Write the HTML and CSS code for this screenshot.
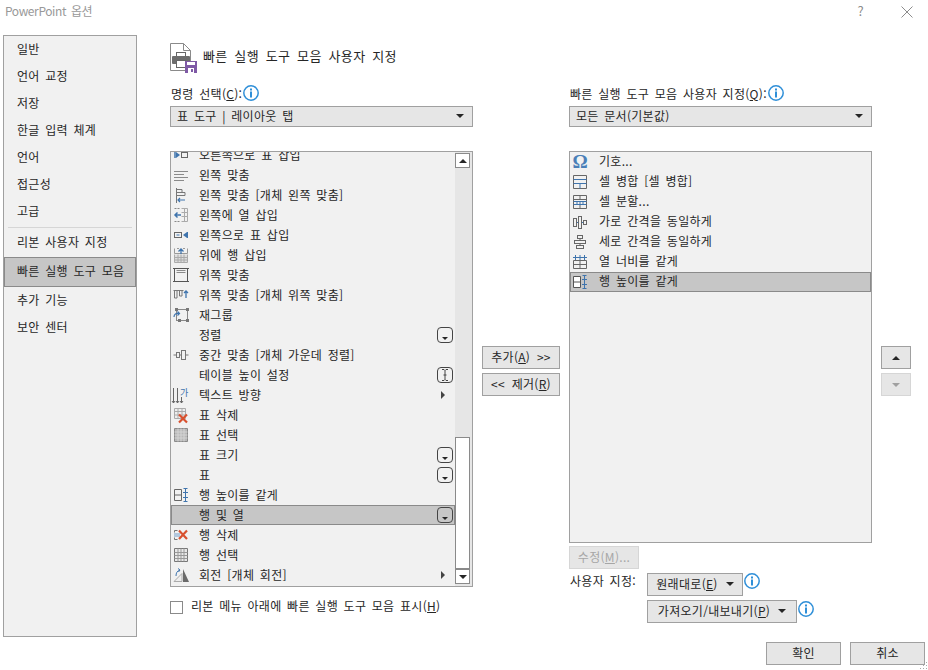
FILE: index.html
```html
<!DOCTYPE html>
<html lang="ko">
<head>
<meta charset="utf-8">
<title>PowerPoint 옵션</title>
<link rel="stylesheet" href="styles.css">
</head>
<body>
<div class="dialog">
  <header class="titlebar">
    <span class="title">PowerPoint 옵션</span>
    <span class="help">?</span>
    <svg class="close" width="12" height="12" viewBox="0 0 12 12"><path d="M.5.5l11 11M11.500.5l-11 11" stroke="#8c8c8c" fill="none"/></svg>
  </header>
  <div class="body">
    <nav class="sidebar">
      <div class="nav-item">일반</div>
      <div class="nav-item">언어 교정</div>
      <div class="nav-item">저장</div>
      <div class="nav-item">한글 입력 체계</div>
      <div class="nav-item">언어</div>
      <div class="nav-item">접근성</div>
      <div class="nav-item">고급</div>
      <div class="nav-sep"></div>
      <div class="nav-item">리본 사용자 지정</div>
      <div class="nav-item nav-selected">빠른 실행 도구 모음</div>
      <div class="nav-item">추가 기능</div>
      <div class="nav-item">보안 센터</div>
    </nav>
    <main class="main">
      <div class="heading">
        <svg class="heading-icon" width="28" height="30" viewBox="0 0 28 30">
          <path d="M.5.5h13l7 7v20H.5z" fill="#fff" stroke="#8a8a8a"/>
          <path d="M13.500.5v7h7" fill="none" stroke="#8a8a8a"/>
          <rect x="6.500" y="9.500" width="9" height="6" fill="#fff" stroke="#666"/>
          <rect x="2" y="13" width="18" height="8" rx="1" fill="#6d6d6d"/>
          <rect x="6.500" y="17.500" width="9" height="7" fill="#fff" stroke="#666"/>
          <rect x="15" y="18" width="12" height="12" fill="#7f5aa6"/>
          <rect x="17" y="19" width="8" height="3" fill="#fff"/>
          <rect x="18" y="25" width="6" height="5" fill="#fff"/>
          <rect x="21" y="26" width="2" height="3" fill="#7f5aa6"/>
        </svg>
        <h1 class="heading-text">빠른 실행 도구 모음 사용자 지정</h1>
      </div>
      <div class="columns">
        <section class="col">
          <div class="field-label"><span>명령 선택(<u>C</u>):</span>
            <svg class="info" width="16" height="16" viewBox="0 0 16 16"><circle cx="8" cy="8" r="7.200" fill="#fff" stroke="#2f8fd8" stroke-width="1.500"/><rect x="7" y="3.500" width="2" height="2" fill="#2f8fd8"/><rect x="7" y="6.500" width="2" height="6" fill="#2f8fd8"/></svg>
          </div>
          <div class="select"><span>표 도구 | 레이아웃 탭</span><i class="tri-down"></i></div>
          <div class="list list-left">
            <div class="list-rows clipped">
              <div class="row"><svg class="ico" viewBox="0 0 16 16"><path d="M2 5v6" stroke="#3f74ad" stroke-width="1.500"/><path d="M3 5l4 3-4 3z" fill="#3f74ad"/><rect x="8.500" y="5.500" width="6" height="5" fill="none" stroke="#666"/></svg><span class="txt">오른쪽으로 표 삽입</span></div>
              <div class="row"><svg class="ico" viewBox="0 0 16 16"><path d="M1 4.500h14M1 7.500h10M1 10.500h14M1 13.500h10" stroke="#8a8a8a"/></svg><span class="txt">왼쪽 맞춤</span></div>
              <div class="row"><svg class="ico" viewBox="0 0 16 16"><path d="M3.500 1v15" stroke="#777"/><path d="M4 2.500h5v3H4M4 5.500h8v3H4" fill="none" stroke="#777"/><path d="M12 13H5M7 11l-2 2 2 2" fill="none" stroke="#3f74ad" stroke-width="1.200"/></svg><span class="txt">왼쪽 맞춤 [개체 왼쪽 맞춤]</span></div>
              <div class="row"><svg class="ico" viewBox="0 0 16 16"><path d="M8.500 1.500h6v13h-6M8.500 5.500h6M8.500 9.500h6M11.500 1.500v13" fill="none" stroke="#aaa"/><path d="M1.500 1.500h5M1.500 14.500h5" stroke="#888" stroke-dasharray="2 1"/><path d="M8 8H2M4.500 5.500L2 8l2.500 2.500" fill="none" stroke="#3f74ad" stroke-width="1.500"/></svg><span class="txt">왼쪽에 열 삽입</span></div>
              <div class="row"><svg class="ico" viewBox="0 0 16 16"><rect x="1.500" y="5.500" width="7" height="5" fill="none" stroke="#666"/><path d="M3.500 8h3" stroke="#3f74ad"/><path d="M10 8l4-3v6z" fill="#3f74ad"/><path d="M14.500 5v6" stroke="#3f74ad"/></svg><span class="txt">왼쪽으로 표 삽입</span></div>
              <div class="row"><svg class="ico" viewBox="0 0 16 16"><path d="M1.500 7.500v8h13v-8M1.500 10.500h13M1.500 13h13M5 7.500v8M8 7.500v8M11 7.500v8" fill="#ddd" stroke="#aaa"/><path d="M1.500 1.500v5h13v-5M4 1.500h2M10 1.500h2" fill="none" stroke="#999"/><path d="M8 7V2M5.500 4.500L8 2l2.500 2.500" fill="none" stroke="#3f74ad" stroke-width="1.300"/></svg><span class="txt">위에 행 삽입</span></div>
              <div class="row"><svg class="ico" viewBox="0 0 16 16"><rect x="1.500" y="1.500" width="13" height="13" fill="none" stroke="#555"/><path d="M0 1.500h16M0 14.500h2M14 14.500h2" stroke="#555"/><path d="M3.500 3.500h9M3.500 5.500h9" stroke="#8a8a8a"/></svg><span class="txt">위쪽 맞춤</span></div>
              <div class="row"><svg class="ico" viewBox="0 0 16 16"><path d="M.500 3.500h10" stroke="#777"/><path d="M1.500 4v7h2.500V4M6.500 4v5H9V4" fill="none" stroke="#777"/><path d="M13 11V4M11 6l2-2 2 2" fill="none" stroke="#3f74ad" stroke-width="1.300"/></svg><span class="txt">위쪽 맞춤 [개체 위쪽 맞춤]</span></div>
              <div class="row"><svg class="ico" viewBox="0 0 16 16"><rect x="3.500" y="2.500" width="11" height="11" fill="none" stroke="#888"/><path d="M2 1h3v3H2zM13 1h3v3h-3zM13 12h3v3h-3zM5 12h3v3H5z" fill="#777"/><path d="M1 10c0-3 2-4 5-3.500M4.500 4.500L6.500 6.500l-2 2" fill="none" stroke="#3f74ad" stroke-width="1.200"/></svg><span class="txt">재그룹</span></div>
              <div class="row"><span class="ico-blank"></span><span class="txt">정렬</span><span class="drop"><i></i></span></div>
              <div class="row"><svg class="ico" viewBox="0 0 16 16"><path d="M.500 8h15" stroke="#777"/><rect x="3.500" y="5.500" width="3" height="5" fill="#f1f1f1" stroke="#777"/><rect x="8.500" y="3.500" width="4" height="9" fill="#f1f1f1" stroke="#777"/></svg><span class="txt">중간 맞춤 [개체 가운데 정렬]</span></div>
              <div class="row"><span class="ico-blank"></span><span class="txt">테이블 높이 설정</span><span class="drop beam"><svg width="8" height="12" viewBox="0 0 8 12"><path d="M1 .5h2l1 1 1-1h2M4 1.500v9M1 11.500h2l1-1 1 1h2M2.500 6h3" fill="none" stroke="#444"/></svg></span></div>
              <div class="row"><svg class="ico" viewBox="0 0 16 16"><path d="M.500 1v15M4.500 1v15M8.500 10v6M-1 14l1.500 2 1.500-2M3 14l1.500 2 1.500-2M7 14l1.500 2 1.500-2" fill="none" stroke="#666"/><text class="ico-glyph" x="7" y="9">가</text></svg><span class="txt">텍스트 방향</span><i class="tri-right"></i></div>
              <div class="row"><svg class="ico" viewBox="0 0 16 16"><path d="M1.500 1.500h11v10h-11zM1.500 4.500h11M1.500 8h11M5 1.500v10M9 1.500v10" fill="#eee" stroke="#aaa"/><path d="M6 8l8 8M14 8l-8 8" stroke="#d8502e" stroke-width="2.200" transform="translate(0 -.5)"/></svg><span class="txt">표 삭제</span></div>
              <div class="row"><svg class="ico" viewBox="0 0 16 16"><path d="M1.500 1.500h13v13h-13z" fill="#b8b8b8" stroke="#8a8a8a"/><path d="M1.500 5h13M1.500 8h13M1.500 11h13M5 1.500v13M8 1.500v13M11 1.500v13" stroke="#d4d4d4"/></svg><span class="txt">표 선택</span></div>
              <div class="row"><span class="ico-blank"></span><span class="txt">표 크기</span><span class="drop"><i></i></span></div>
              <div class="row"><span class="ico-blank"></span><span class="txt">표</span><span class="drop"><i></i></span></div>
              <div class="row"><svg class="ico" viewBox="0 0 16 16"><path d="M1.500 2.500h7v11h-7zM1.500 8h7" fill="none" stroke="#666"/><path d="M12.500 1.500v13M10.500 1.500h4M10.500 14.500h4M10 5.500h5M10 10.500h5" fill="none" stroke="#3f74ad"/></svg><span class="txt">행 높이를 같게</span></div>
              <div class="row row-selected"><span class="ico-blank"></span><span class="txt">행 및 열</span><span class="drop"><i></i></span></div>
              <div class="row"><svg class="ico" viewBox="0 0 16 16"><path d="M1.500 3.500h3M1.500 12.500h3M1.500 3.500v2M1.500 10.500v2" fill="none" stroke="#777"/><path d="M1 7h6M1 9h6" stroke="#9db9d6" stroke-width="1.500"/><path d="M6 3.500l8 8.500M14 3.500l-8 8.500" stroke="#d8502e" stroke-width="2.200"/></svg><span class="txt">행 삭제</span></div>
              <div class="row"><svg class="ico" viewBox="0 0 16 16"><path d="M1.500 1.500h13v13h-13z" fill="#e8e8e8" stroke="#777"/><path d="M1.500 5.500h13M1.500 8.500h13M1.500 11.500h13M5 1.500v13M8 1.500v13M11 1.500v13" stroke="#999"/></svg><span class="txt">행 선택</span></div>
              <div class="row"><svg class="ico" viewBox="0 0 16 16"><path d="M9 14.500H1l8-8z" fill="#eee" stroke="#aaa"/><path d="M10 2v13h6z" fill="#6a6a6a"/><path d="M3 9c0-3 1-5 4-6M5 1.500l2 1.500-1.500 2" fill="none" stroke="#3f74ad"/></svg><span class="txt">회전 [개체 회전]</span><i class="tri-right"></i></div>
            </div>
            <div class="scrollbar">
              <div class="sb-btn"><i class="tri-up"></i></div>
              <div class="sb-track"></div>
              <div class="sb-thumb"></div>
              <div class="sb-btn"><i class="tri-down"></i></div>
            </div>
          </div>
          <label class="check-row"><span class="checkbox"></span><span class="check-text">리본 메뉴 아래에 빠른 실행 도구 모음 표시(<u>H</u>)</span></label>
        </section>
        <section class="col-mid">
          <button class="btn btn-mid">추가(<u>A</u>) &gt;&gt;</button>
          <button class="btn btn-mid">&lt;&lt; 제거(<u>R</u>)</button>
        </section>
        <section class="col">
          <div class="field-label"><span>빠른 실행 도구 모음 사용자 지정(<u>Q</u>):</span>
            <svg class="info" width="16" height="16" viewBox="0 0 16 16"><circle cx="8" cy="8" r="7.200" fill="#fff" stroke="#2f8fd8" stroke-width="1.500"/><rect x="7" y="3.500" width="2" height="2" fill="#2f8fd8"/><rect x="7" y="6.500" width="2" height="6" fill="#2f8fd8"/></svg>
          </div>
          <div class="select"><span>모든 문서(기본값)</span><i class="tri-down"></i></div>
          <div class="list list-right">
            <div class="list-rows">
              <div class="row"><span class="ico omega">Ω</span><span class="txt">기호...</span></div>
              <div class="row"><svg class="ico" viewBox="0 0 16 16"><path d="M1.500 1.500h13v13h-13z" fill="none" stroke="#666"/><path d="M1.500 5.500h13M8 9.500v5M1.500 9.500h13" fill="none" stroke="#3f74ad"/></svg><span class="txt">셀 병합 [셀 병합]</span></div>
              <div class="row"><svg class="ico" viewBox="0 0 16 16"><path d="M1.500 1.500h13v13h-13zM1.500 5.500h13M8 1.500v4M8 10v4.500" fill="none" stroke="#666"/><path d="M1.500 7.500h13M1.500 10.500h13M5 7.500v3M8 7.500v3M11 7.500v3" stroke="#3f74ad"/></svg><span class="txt">셀 분할...</span></div>
              <div class="row"><svg class="ico" viewBox="0 0 16 16"><rect x="1.500" y="4.500" width="3" height="8" fill="none" stroke="#666"/><rect x="6.500" y="2.500" width="3" height="12" fill="none" stroke="#666"/><rect x="11.500" y="6.500" width="3" height="4" fill="none" stroke="#666"/><path d="M5 8.500h1M10 8.500h1" stroke="#3f74ad"/></svg><span class="txt">가로 간격을 동일하게</span></div>
              <div class="row"><svg class="ico" viewBox="0 0 16 16"><rect x="5.500" y="1.500" width="5" height="3" fill="none" stroke="#666"/><rect x="2.500" y="6.500" width="11" height="3" fill="none" stroke="#666"/><rect x="4.500" y="11.500" width="7" height="3" fill="none" stroke="#666"/><path d="M8 4.500v2M8 9.500v2" stroke="#666"/></svg><span class="txt">세로 간격을 동일하게</span></div>
              <div class="row"><svg class="ico" viewBox="0 0 16 16"><path d="M1.500 6.500h13v8h-13zM8 6.500v8M1.500 10.500h13" fill="none" stroke="#666"/><path d="M1 3.500h14M3.500 1v5M12.500 1v5M8 1v5" stroke="#3f74ad"/></svg><span class="txt">열 너비를 같게</span></div>
              <div class="row row-selected"><svg class="ico" viewBox="0 0 16 16"><path d="M1.500 2.500h7v11h-7zM1.500 8h7" fill="#fff" stroke="#555"/><path d="M12.500 1.500v13M10.500 1.500h4M10.500 14.500h4M10 5.500h5M10 10.500h5" fill="none" stroke="#3f74ad"/></svg><span class="txt">행 높이를 같게</span></div>
            </div>
          </div>
          <button class="btn btn-edit" disabled>수정(<u>M</u>)...</button>
          <div class="custom">
            <span class="custom-label">사용자 지정:</span>
            <div class="custom-btns">
              <div class="custom-row">
                <button class="btn btn-reset">원래대로(<u>E</u>)<i class="tri-down menu-tri"></i></button>
                <svg class="info" width="16" height="16" viewBox="0 0 16 16"><circle cx="8" cy="8" r="7.200" fill="#fff" stroke="#2f8fd8" stroke-width="1.500"/><rect x="7" y="3.500" width="2" height="2" fill="#2f8fd8"/><rect x="7" y="6.500" width="2" height="6" fill="#2f8fd8"/></svg>
              </div>
              <div class="custom-row">
                <button class="btn btn-import">가져오기/내보내기(<u>P</u>)<i class="tri-down menu-tri"></i></button>
                <svg class="info" width="16" height="16" viewBox="0 0 16 16"><circle cx="8" cy="8" r="7.200" fill="#fff" stroke="#2f8fd8" stroke-width="1.500"/><rect x="7" y="3.500" width="2" height="2" fill="#2f8fd8"/><rect x="7" y="6.500" width="2" height="6" fill="#2f8fd8"/></svg>
              </div>
            </div>
          </div>
        </section>
        <section class="col-move">
          <button class="btn btn-move"><i class="tri-up"></i></button>
          <button class="btn btn-move btn-move-off" disabled><i class="tri-down"></i></button>
        </section>
      </div>
    </main>
  </div>
  <footer class="footer">
    <button class="btn btn-foot">확인</button>
    <button class="btn btn-foot">취소</button>
    <svg class="grip" width="8" height="8" viewBox="0 0 8 8"><path d="M6 0h1v1H6zM6 3h1v1H6zM3 3h1v1H3zM6 6h1v1H6zM3 6h1v1H3zM0 6h1v1H0z" fill="#aaa"/></svg>
  </footer>
</div>
</body>
</html>
```
FILE: styles.css
```css
* { box-sizing: border-box; }
html, body { margin: 0; padding: 0; }
body {
  width: 928px;
  height: 670px;
  overflow: hidden;
  background: #fff;
  color: #262626;
  font-family: "Noto Sans CJK KR", "Noto Sans", sans-serif;
  font-size: 12px;
  letter-spacing: .3px;
  word-spacing: 1.9px;
}
u { text-underline-offset: 1px; }
i { display: block; flex: none; }
.dialog { width: 928px; height: 670px; position: relative; }

.titlebar { height: 35px; display: flex; align-items: flex-start; padding: 3px 15px 0 5px; }
.title { color: #999; line-height: 16px; letter-spacing: -.4px; }
.help { margin-left: auto; color: #8c8c8c; line-height: 16px; font-size: 13px; }
.close { margin: 3px 0 0 37px; }

.body { display: flex; padding-left: 3px; height: 602px; }
.sidebar { width: 134px; height: 602px; background: #f1f1f1; border: 1px solid #a0a0a0; }
.nav-item { height: 27px; line-height: 25px; padding-left: 13px; }
.nav-sep { height: 1px; margin: 2px 4px 1px; background: #d6d6d6; }
.nav-selected { height: 30px; line-height: 26px; background: #c6c6c6; border: 1px solid #8a8a8a; padding-left: 12px; margin: 1px 0 0; }

.main { margin-left: 33px; display: flex; flex-direction: column; }
.heading { display: flex; align-items: flex-start; height: 28px; margin-top: 8px; gap: 5px; }
.heading-icon { flex: none; }
.heading-text { margin: 3px 0 0; line-height: 20px; font-size: 13px; font-weight: 400; letter-spacing: .4px; word-spacing: 2.6px; }

.columns { display: grid; grid-template-columns: 303px 78px 303px 30px; column-gap: 9px; margin-top: 13px; }
.col { display: flex; flex-direction: column; }
.field-label { height: 18px; display: flex; align-items: center; gap: 1px; padding-left: 1px; }
.info { flex: none; }
.select { height: 21px; margin-top: 4px; background: #e6e6e6; border: 1px solid #a0a0a0; display: flex; align-items: center; justify-content: space-between; padding: 0 8px 2px 6px; }
.tri-down { width: 0; height: 0; border-left: 4px solid transparent; border-right: 4px solid transparent; border-top: 4px solid #262626; }
.tri-up { width: 0; height: 0; border-left: 4px solid transparent; border-right: 4px solid transparent; border-bottom: 4px solid #262626; }
.tri-right { width: 0; height: 0; border-top: 4px solid transparent; border-bottom: 4px solid transparent; border-left: 4px solid #444; margin-left: auto; margin-right: 8px; }

.list { margin-top: 24px; border: 1px solid #a0a0a0; background: #f1f1f1; overflow: hidden; display: flex; }
.list-left { height: 436px; }
.list-right { height: 392px; }
.list-rows { flex: 1; min-width: 0; }
.clipped { margin-top: -7px; }
.row { height: 20px; display: flex; align-items: center; padding: 0 2px; }
.txt { margin-top: -1px; }
.row-selected { background: #c6c6c6; outline: 1px solid #8a8a8a; outline-offset: -1px; }
.ico { width: 16px; height: 16px; flex: none; margin-right: 10px; display: block; overflow: visible; }
.ico-blank { width: 16px; flex: none; margin-right: 10px; }
.ico-glyph { font-size: 9px; fill: #3f74ad; letter-spacing: 0; }
.omega { font-family: "Liberation Serif", serif; font-weight: 700; font-size: 19px; line-height: 16px; color: #4a7fb8; text-align: center; letter-spacing: 0; }
.drop { width: 16px; height: 16px; flex: none; margin-left: auto; background: transparent; border: 1px solid #444; border-radius: 4px; display: flex; align-items: flex-end; justify-content: center; padding-bottom: 2px; }
.drop i { width: 0; height: 0; border-left: 3px solid transparent; border-right: 3px solid transparent; border-top: 3px solid #262626; }
.beam { align-items: center; padding-bottom: 0; }

.list-right .row { padding: 0 1px 0 2px; }
.list-right .txt { margin-top: -4px; }
.list-right .ico, .list-right .omega { margin-right: 11px; }
.list-right .omega { width: 16px; }

.scrollbar { width: 17px; flex: none; background: #e6e6e6; display: flex; flex-direction: column; padding-top: 1px; }
.sb-btn { width: 15px; height: 15px; background: #fff; border: 1px solid #8a8a8a; display: flex; align-items: center; justify-content: center; flex: none; }
.sb-track { height: 269px; flex: none; }
.sb-thumb { width: 15px; height: 132px; background: #fff; border: 1px solid #8a8a8a; flex: none; }

.check-row { display: flex; align-items: center; margin-top: 13px; height: 14px; gap: 8px; }
.check-text { margin-bottom: 3px; }
.checkbox { width: 13px; height: 13px; border: 1px solid #8a8a8a; background: #fff; flex: none; }

.btn { font: inherit; letter-spacing: inherit; word-spacing: inherit; color: #262626; background: #e6e6e6; border: 1px solid #a0a0a0; padding: 0 0 2px; display: flex; align-items: center; justify-content: center; }
.col-mid { padding-top: 262px; display: flex; flex-direction: column; gap: 4px; }
.btn-mid { width: 78px; height: 23px; word-spacing: 3px; }
.col-move { padding-top: 262px; display: flex; flex-direction: column; gap: 4px; }
.btn-move { width: 30px; height: 23px; padding: 0; }
.btn-move-off { border-color: #d6d6d6; }
.btn-move-off .tri-down { border-top-color: #a0a0a0; }

.btn-edit { width: 70px; height: 23px; margin-top: 3px; color: #a6a6a6; border-color: #d6d6d6; }
.custom { display: flex; margin-top: 4px; padding-left: 1px; }
.custom-label { width: 77px; line-height: 16px; }
.custom-btns { display: flex; flex-direction: column; gap: 4px; }
.custom-row { display: flex; align-items: flex-start; gap: 1px; }
.custom-row + .custom-row .info { margin-top: 1px; }
.btn-reset { width: 96px; height: 23px; }
.btn-import { width: 150px; height: 23px; }
.menu-tri { margin-left: 8px; }

.footer { display: flex; justify-content: flex-end; gap: 9px; padding: 5px 3px 0 0; position: relative; height: 33px; }
.btn-foot { width: 75px; height: 23px; }
.grip { position: absolute; right: 0; bottom: 0; }
```
